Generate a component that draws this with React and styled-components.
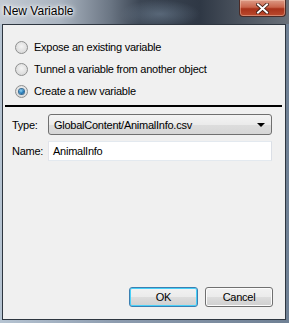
import React from 'react'
import styled, { createGlobalStyle } from 'styled-components'

const Global = createGlobalStyle`
  html, body {
    margin: 0;
    padding: 0;
    background: #5b6d80;
  }
  * { box-sizing: border-box; }
`

const Frame = styled.div`
  width: 289px;
  height: 323px;
  display: flex;
  flex-direction: column;
  padding: 0 3px 3px 2px;
  background: linear-gradient(90deg, #b6c4d2 0%, #8d9caf 40%, #6f8094 100%);
  font-family: "Liberation Sans", Arial, sans-serif;
  overflow: hidden;
`

const TitleBar = styled.div`
  position: relative;
  height: 24px;
  margin: 0 -3px 0 -2px;
  padding: 4px 0 0 3px;
  background:
    radial-gradient(ellipse 40px 14px at 160px 14px, rgba(120,140,160,0.5), transparent),
    linear-gradient(90deg, #c3cad3 0px, #aab4c0 60px, #6b7684 110px, #3c4654 140px, #2f3845 200px, #4b535e 240px, #6a7079 289px);
  flex-shrink: 0;
`

const Title = styled.div`
  font-size: 12px;
  line-height: 15px;
  color: #000;
  text-shadow: 0 0 6px #fff, 0 0 4px #fff, 0 0 2px #fff;
`

const CloseButton = styled.div`
  position: absolute;
  top: 0;
  left: 239px;
  width: 47px;
  height: 17px;
  border: 1px solid #4a2a26;
  border-top: none;
  border-radius: 0 0 4px 4px;
  background: linear-gradient(180deg, #dc9a86 0%, #c9644b 45%, #a8321a 55%, #bb4a2e 100%);
  box-shadow: inset 0 0 0 1px rgba(255,220,200,0.4);
  display: flex;
  align-items: center;
  justify-content: center;
`

const Client = styled.div`
  flex: 1;
  display: flex;
  flex-direction: column;
  background: #f0f0f0;
  border: 1px solid #2e3640;
  font-size: 11px;
  letter-spacing: -0.25px;
  color: #000;
`

const RadioGroup = styled.div`
  display: flex;
  flex-direction: column;
  padding: 11px 0 0 12px;
`

const RadioRow = styled.label`
  height: 22px;
  display: flex;
  align-items: center;
  gap: 6px;
`

const RadioDot = styled.span`
  width: 13px;
  height: 13px;
  border-radius: 50%;
  border: 1px solid #8e8f8f;
  background: radial-gradient(circle at 50% 40%, #f4f4f4 0%, #dcdcdc 70%, #cfcfcf 100%);
  display: flex;
  align-items: center;
  justify-content: center;
  flex-shrink: 0;
  &::after {
    content: "";
    display: ${p => (p.$checked ? 'block' : 'none')};
    width: 5px;
    height: 5px;
    border-radius: 50%;
    background: radial-gradient(circle at 40% 35%, #8fd3f5 0%, #1b74b4 60%, #0d3f6e 100%);
    box-shadow: 0 0 0 1px #3a6d94;
  }
`

const Separator = styled.div`
  height: 2px;
  margin: 3px 3px 0 2px;
  background: #000;
`

const FieldRow = styled.div`
  display: flex;
  align-items: center;
  padding: 0 13px 0 9px;
  margin-top: ${p => p.$gap}px;
`

const FieldLabel = styled.span`
  width: 36px;
  flex-shrink: 0;
`

const Select = styled.div`
  flex: 1;
  height: 21px;
  border: 1px solid #707070;
  border-radius: 3px;
  background: linear-gradient(180deg, #f4f4f4 0%, #ebebeb 50%, #dddddd 51%, #d6d6d6 100%);
  display: flex;
  align-items: center;
  justify-content: space-between;
  padding: 0 6px 0 5px;
`

const Arrow = styled.span`
  width: 0;
  height: 0;
  border-left: 4px solid transparent;
  border-right: 4px solid transparent;
  border-top: 4px solid #000;
`

const TextInput = styled.div`
  flex: 1;
  height: 20px;
  border: 1px solid #abadb3;
  border-top-color: #e3e9ef;
  border-left-color: #e2e3ea;
  border-right-color: #dbdfe6;
  border-bottom-color: #e3e9ef;
  background: #fff;
  display: flex;
  align-items: center;
  padding: 0 4px;
`

const ButtonBar = styled.div`
  margin-top: auto;
  display: flex;
  justify-content: flex-end;
  gap: 7px;
  padding: 0 12px 12px 0;
`

const Button = styled.button`
  width: ${p => p.$w}px;
  height: 20px;
  font-family: inherit;
  font-size: 11px;
  letter-spacing: inherit;
  color: #000;
  border-radius: 3px;
  border: 1px solid ${p => (p.$primary ? '#3c7fb1' : '#707070')};
  background: linear-gradient(180deg, #f2f2f2 0%, #ebebeb 50%, #dddddd 51%, #cfcfcf 100%);
  box-shadow: inset 0 0 0 1px ${p => (p.$primary ? '#48d0f8' : '#fcfcfc')};
  padding: 0;
`

const options = [
  { text: 'Expose an existing variable', checked: false },
  { text: 'Tunnel a variable from another object', checked: false },
  { text: 'Create a new variable', checked: true },
]

export default function App() {
  return (
    <>
      <Global />
      <Frame>
        <TitleBar>
          <Title>New Variable</Title>
          <CloseButton>
            <svg width="13" height="11" viewBox="0 0 13 11">
              <path d="M2 1.5 L11 9.5 M11 1.5 L2 9.5" stroke="#3a1810" strokeWidth="3.6" strokeLinecap="square" />
              <path d="M2 1.5 L11 9.5 M11 1.5 L2 9.5" stroke="#fff" strokeWidth="2" strokeLinecap="square" />
            </svg>
          </CloseButton>
        </TitleBar>
        <Client>
          <RadioGroup>
            {options.map(o => (
              <RadioRow key={o.text}>
                <RadioDot $checked={o.checked} />
                {o.text}
              </RadioRow>
            ))}
          </RadioGroup>
          <Separator />
          <FieldRow $gap={7}>
            <FieldLabel>Type:</FieldLabel>
            <Select>
              GlobalContent/AnimalInfo.csv
              <Arrow />
            </Select>
          </FieldRow>
          <FieldRow $gap={6}>
            <FieldLabel>Name:</FieldLabel>
            <TextInput>AnimalInfo</TextInput>
          </FieldRow>
          <ButtonBar>
            <Button $primary $w={69}>OK</Button>
            <Button $w={68}>Cancel</Button>
          </ButtonBar>
        </Client>
      </Frame>
    </>
  )
}
